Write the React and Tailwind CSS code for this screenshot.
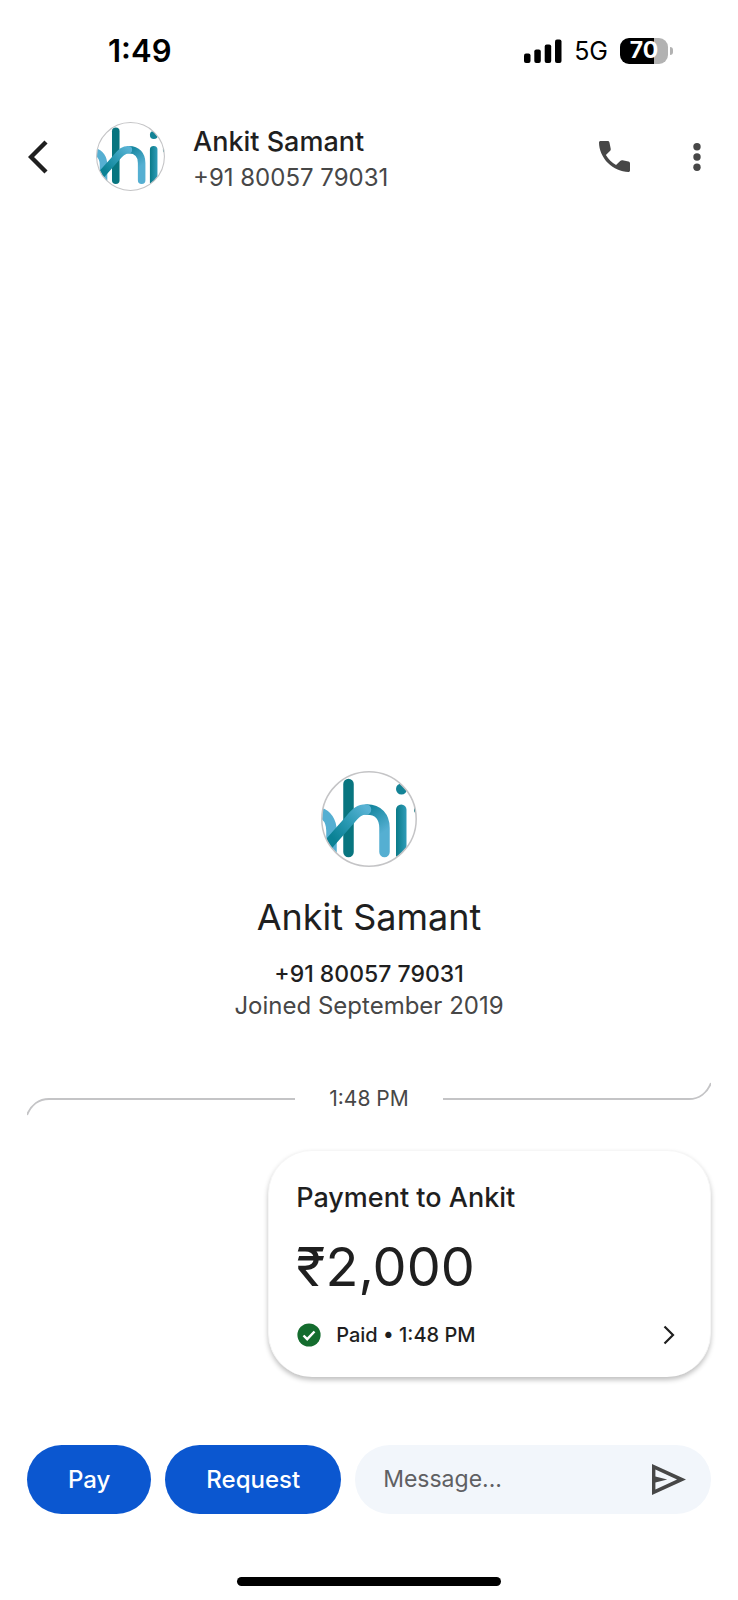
import React from "react";

function Avatar({ id, className }) {
  return (
    <svg viewBox="0 0 96 96" className={className} role="img" aria-label="Ankit Samant">
      <defs>
        <clipPath id={`${id}-clip`}>
          <circle cx="48" cy="48" r="47" />
        </clipPath>
        <linearGradient id={`${id}-rise`} gradientUnits="userSpaceOnUse" x1="10" y1="72" x2="46" y2="38">
          <stop offset="0.1" stopColor="#0a8194" />
          <stop offset="0.55" stopColor="#2b9ab4" />
          <stop offset="1" stopColor="#58b2d4" />
        </linearGradient>
        <linearGradient id={`${id}-arch`} gradientUnits="userSpaceOnUse" x1="48" y1="38" x2="64" y2="60">
          <stop offset="0" stopColor="#1687a0" />
          <stop offset="1" stopColor="#55afd2" />
        </linearGradient>
        <linearGradient id={`${id}-i`} x1="0" x2="1" y1="0" y2="0">
          <stop offset="0" stopColor="#0a7a88" />
          <stop offset="1" stopColor="#2f9cb8" />
        </linearGradient>
      </defs>
      <circle cx="48" cy="48" r="48" fill="#fff" />
      <g clipPath={`url(#${id}-clip)`} fill="none" strokeLinecap="round">
        <path d="M-3 41C6 43 10.5 51 10.5 60V84" stroke="#55afd2" strokeWidth="10.5" />
        <path d="M27.5 13V81" stroke="#08757f" strokeWidth="10.5" />
        <path d="M46 38.5C57 38.5 63.5 46 63.5 57V81" stroke={`url(#${id}-arch)`} strokeWidth="10.5" />
        <path d="M5 76L28 50C35 41 39 38.5 45 38.5" stroke={`url(#${id}-rise)`} strokeWidth="10.5" />
        <rect x="75" y="33.5" width="10.5" height="56" rx="5.2" fill={`url(#${id}-i)`} />
        <circle cx="80.5" cy="18" r="5.5" fill="#138396" />
        <circle cx="97" cy="39" r="4" fill="#08757f" />
      </g>
      <circle cx="48" cy="48" r="47.2" fill="none" stroke="#c4c4c6" strokeWidth="1.5" />
    </svg>
  );
}

function StatusBar() {
  return (
    <div className="flex h-[101px] items-center justify-between pr-[65px] pl-27">
      <span className="text-[31px] leading-10 font-semibold text-black">1:49</span>
      <div className="flex items-center">
        <svg viewBox="0 0 38 24" className="h-6 w-[38px]" fill="#000" aria-label="Signal strength">
          <rect x="0" y="14.5" width="6.5" height="9.5" rx="2" />
          <rect x="10.3" y="10.5" width="6.5" height="13.5" rx="2" />
          <rect x="20.7" y="5.5" width="6.5" height="18.5" rx="2" />
          <rect x="31" y="0.5" width="6.5" height="23.5" rx="2" />
        </svg>
        <span className="ml-3 text-[25px] leading-8 text-black">5G</span>
        <div className="ml-3 flex items-center gap-[2px]">
          <div className="flex h-[26px] w-12 items-center justify-center rounded-[9px] bg-linear-to-r from-black from-70% to-[#b2b2b2] to-70% text-[23px] leading-none font-bold text-white">
            70
          </div>
          <div className="h-2 w-[3px] rounded-r-full bg-[#b2b2b2]" />
        </div>
      </div>
    </div>
  );
}

function Header() {
  return (
    <header className="flex h-[111px] items-center pr-[25px] pl-7">
      <button type="button" aria-label="Back" className="w-[68px]">
        <svg viewBox="0 0 20 34" className="h-[34px] w-5" fill="none" stroke="#1f1f1f" strokeWidth="4.4">
          <path d="M18 2L3 17L18 32" />
        </svg>
      </button>
      <Avatar id="header-avatar" className="size-[69px]" />
      <div className="ml-7 flex-1 pt-[6px]">
        <h1 className="text-[27px] leading-9 font-medium">Ankit Samant</h1>
        <p className="text-2xl leading-9 text-[#474747]">+91 80057 79031</p>
      </div>
      <button type="button" aria-label="Call">
        <svg viewBox="3 3 18 18" className="size-[31px]" fill="#474747">
          <path d="M20.1 21C17.9 21 15.8 20.5 13.8 19.6C11.7 18.7 9.9 17.4 8.2 15.8C6.6 14.1 5.3 12.3 4.4 10.2C3.5 8.2 3 6.1 3 3.9C3 3.4 3.4 3 3.9 3H8C8.6 3 9 3.4 9.1 4L9.8 7.5C9.9 8 9.8 8.4 9.5 8.7L7 11.2C8.5 13.7 10.4 15.6 12.9 17L15.3 14.6C15.7 14.2 16.2 14.1 16.7 14.2L20.1 14.9C20.7 15 21 15.4 21 16V20.1C21 20.6 20.6 21 20.1 21Z" />
        </svg>
      </button>
      <button type="button" aria-label="More options" className="ml-[51px] flex w-8 justify-center">
        <svg viewBox="0 0 8 28" className="h-7 w-2" fill="#474747">
          <circle cx="4" cy="3.8" r="3.7" />
          <circle cx="4" cy="14" r="3.7" />
          <circle cx="4" cy="24.2" r="3.7" />
        </svg>
      </button>
    </header>
  );
}

function TimeDivider() {
  return (
    <div className="mt-[59px] flex h-[38px] items-center px-[27px]">
      <div className="flex flex-1 items-start self-stretch pt-[18px]">
        <svg viewBox="0 0 22 18" className="h-[18px] w-[22px]" fill="none" stroke="#c4c4c6" strokeWidth="2">
          <path d="M0 17C4 7 12 1 22 1" />
        </svg>
        <div className="h-[2px] flex-1 bg-[#c4c4c6]" />
      </div>
      <time className="w-[148px] text-center text-[21px] leading-7 text-[#474747]">1:48 PM</time>
      <div className="flex flex-1 items-end self-stretch pb-[18px]">
        <div className="h-[2px] flex-1 bg-[#c4c4c6]" />
        <svg viewBox="0 0 22 18" className="h-[18px] w-[22px]" fill="none" stroke="#c4c4c6" strokeWidth="2">
          <path d="M0 17C10 17 18 11 22 1" />
        </svg>
      </div>
    </div>
  );
}

function PaymentCard() {
  return (
    <button
      type="button"
      className="mt-8 mr-[27px] flex w-3/5 flex-col self-end rounded-[44px] border border-b-0 border-[#f6f6f6] bg-white px-[27px] pt-7 pb-[26px] text-left shadow-[0_3px_5px_rgba(0,0,0,0.25)]"
    >
      <span className="text-[27px] leading-[38px] font-medium">Payment to Ankit</span>
      <span className="mt-4 text-[54px] leading-[68px]">₹2,000</span>
      <span className="mt-[18px] flex items-center self-stretch">
        <svg viewBox="0 0 24 24" className="mx-px size-6">
          <circle cx="12" cy="12" r="11.6" fill="#146c2e" />
          <path d="M6.5 12.5L10.2 16.2L17.5 8.5" fill="none" stroke="#fff" strokeWidth="2.4" />
        </svg>
        <span className="ml-[14px] flex-1 text-xl leading-8 font-medium">Paid • 1:48 PM</span>
        <svg viewBox="0 0 12 20" className="mr-2 h-5 w-3" fill="none" stroke="#1f1f1f" strokeWidth="2.2">
          <path d="M1.5 1.5L10 10L1.5 18.5" />
        </svg>
      </span>
    </button>
  );
}

function Composer() {
  return (
    <form className="flex h-[69px] gap-[14px] px-[27px]" onSubmit={(e) => e.preventDefault()}>
      <button type="button" className="rounded-full bg-[#0b57d0] px-[41px] text-2xl font-medium text-white">
        Pay
      </button>
      <button type="button" className="rounded-full bg-[#0b57d0] px-[41px] text-2xl font-medium text-white">
        Request
      </button>
      <div className="flex min-w-0 flex-1 items-center rounded-full bg-[#f2f6fb] pr-[25px] pl-7">
        <input
          type="text"
          aria-label="Message"
          placeholder="Message..."
          className="min-w-0 flex-1 bg-transparent text-[23px] outline-none placeholder:text-[#5f6063]"
        />
        <button type="submit" aria-label="Send">
          <svg viewBox="3 4 19 16" preserveAspectRatio="none" className="h-[31px] w-[34px]" fill="#474747">
            <path d="M3 20V4l19 8-19 8zm1.9-2.9L17 12 4.9 6.9v3.6l6.6 1.5-6.6 1.5z" />
          </svg>
        </button>
      </div>
    </form>
  );
}

export default function App() {
  return (
    <div className="flex min-h-screen flex-col bg-white font-['Inter','Noto_Sans',sans-serif] text-[#1f1f1f]">
      <StatusBar />
      <Header />
      <main className="flex flex-1 flex-col justify-end">
        <section className="flex flex-col items-center">
          <Avatar id="profile-avatar" className="size-24" />
          <h2 className="mt-6 text-4xl leading-[52px]">Ankit Samant</h2>
          <p className="mt-4 text-[23px] leading-[31px] font-medium">+91 80057 79031</p>
          <p className="text-2xl leading-[31px] text-[#474747]">Joined September 2019</p>
        </section>
        <TimeDivider />
        <PaymentCard />
      </main>
      <footer className="mt-[68px]">
        <Composer />
        <div className="mx-auto mt-[63px] mb-[14px] h-[9px] w-[264px] rounded-full bg-black" />
      </footer>
    </div>
  );
}
